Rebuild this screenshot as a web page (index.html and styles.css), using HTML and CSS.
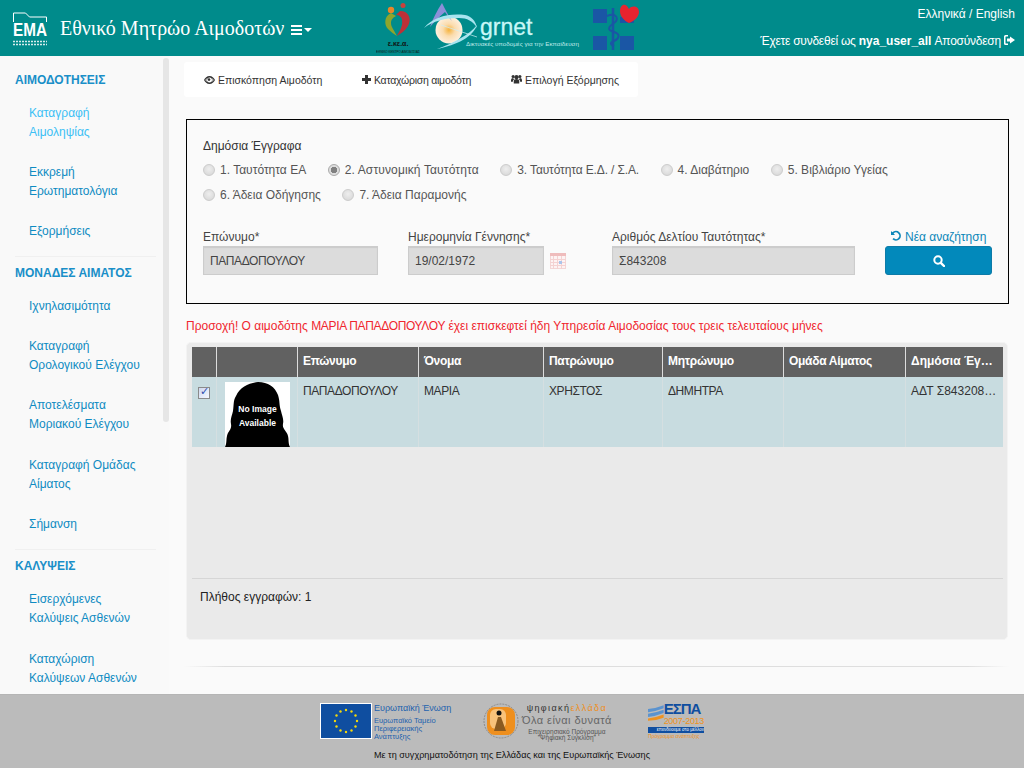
FILE: index.html
```html
<!DOCTYPE html>
<html lang="el">
<head>
<meta charset="utf-8">
<title>Εθνικό Μητρώο Αιμοδοτών</title>
<link rel="stylesheet" href="styles.css">
</head>
<body>
<div class="page">
<header class="topbar">
  <div class="brand">
    <svg class="ema-logo" width="42" height="36" viewBox="0 0 42 36">
      <path d="M1.500 10V1h12l4 4h17v5" fill="none" stroke="#fff" stroke-width="1"/>
      <path d="M1 29.500h34M1 32.500h34" stroke="#d5ecec" stroke-width="1.500" stroke-dasharray="2 1"/>
      <text x="1" y="24" class="ema-text" textLength="34" lengthAdjust="spacingAndGlyphs">EMA</text>
    </svg>
    <span class="brand-title">Εθνικό Μητρώο Αιμοδοτών</span>
    <svg class="brand-menu" width="21" height="10" viewBox="0 0 21 10">
      <path d="M0 0h11v2H0zM0 4h11v2H0zM0 8h11v2H0zM13 3h8l-4 4z" fill="#fff"/>
    </svg>
  </div>
  <div class="logos">
    <svg class="logo-ekea" width="44" height="52" viewBox="0 0 44 52">
      <circle cx="15" cy="7" r="3.200" fill="#e8862a"/>
      <circle cx="27" cy="2.500" r="2.500" fill="#c9413c"/>
      <path d="M15 10C8 13 8 22 12 26c3 3 6 5 9 7-3-6-6-9-6-13 0-4 3-6 5-7z" fill="#8fa52c"/>
      <path d="M24 8c9 0 12 8 8 15-3 5-8 8-11 10 3-6 6-10 5-16 0-3-3-5-6-5z" fill="#bd3138"/>
      <text x="22" y="43" class="ekea-name">ε.κε.α.</text>
      <text x="22" y="50" class="ekea-sub">ΕΘΝΙΚΟ ΚΕΝΤΡΟ ΑΙΜΟΔΟΣΙΑΣ</text>
    </svg>
    <svg class="logo-grnet" width="172" height="52" viewBox="0 0 172 52">
      <defs>
        <radialGradient id="sun"><stop offset="0" stop-color="#f6b33c"/><stop offset=".45" stop-color="#fbdcae"/><stop offset="1" stop-color="#fdf0df"/></radialGradient>
      </defs>
      <circle cx="28" cy="27" r="13.500" fill="url(#sun)"/>
      <path d="M21 0C16 8 12 15 9 24c5-6 10-11 15-15 2 3 4 6 7 9-4-6-7-12-10-18z" fill="#8b8fd8"/>
      <path d="M3 25C12 14 28 10 44 12c6 1 11 6 12 13-4-7-10-10-18-10C24 15 12 18 3 25z" fill="#a8e4ef"/>
      <path d="M16 46c16-6 32-14 40-24-4 12-20 20-40 24z" fill="#a8e4ef"/>
      <path d="M20 22l36 12" stroke="#cfeef3" stroke-width=".7"/>
      <text x="59" y="32" class="grnet-name">grnet</text>
      <text x="45" y="43" class="grnet-sub" textLength="113" lengthAdjust="spacingAndGlyphs">Δικτυακές υποδομές για την Εκπαίδευση</text>
    </svg>
    <svg class="logo-moh" width="46" height="48" viewBox="0 0 46 48">
      <path d="M0 6h14v14H0zM0 33h14v14H0zM27 33h14v14H27zM27 14h14v6H27z" fill="#1a56a5"/>
      <path d="M36 6c-3-7-9-5-9 2 0 6 5 10 9 12 5-2 10-6 10-11 0-6-7-7-10-3z" fill="#e8232f"/>
      <path d="M20 5v42" stroke="#1a56a5" stroke-width="2.500"/>
      <path d="M14 13c9-4 13 3 7 7s-7 7 0 9 5 7 0 9-3 4 0 5" fill="none" stroke="#1a56a5" stroke-width="2"/>
    </svg>
  </div>
  <div class="account">
    <div class="lang">Ελληνικά / English</div>
    <div class="user">Έχετε συνδεθεί ως <b class="user-name">nya_user_all</b> Αποσύνδεση
      <svg width="11" height="10" viewBox="0 0 11 10"><path d="M4 0v1.500H2Q1.500 1.500 1.500 2v6q0 .5.5.5h2V10H1.500Q0 10 0 8.500v-7Q0 0 1.500 0zM6 1.500 11 5 6 8.500V6.500H3v-3h3z" fill="#fff"/></svg>
    </div>
  </div>
</header>

<div class="body-row">
  <nav class="sidebar">
    <div class="side-group side-group-1">
      <h3 class="side-title">ΑΙΜΟΔΟΤΗΣΕΙΣ</h3>
      <a class="side-link is-active">Καταγραφή<br>Αιμοληψίας</a>
      <a class="side-link">Εκκρεμή<br>Ερωτηματολόγια</a>
      <a class="side-link">Εξορμήσεις</a>
    </div>
    <div class="side-group">
      <h3 class="side-title">ΜΟΝΑΔΕΣ ΑΙΜΑΤΟΣ</h3>
      <a class="side-link">Ιχνηλασιμότητα</a>
      <a class="side-link">Καταγραφή<br>Ορολογικού Ελέγχου</a>
      <a class="side-link">Αποτελέσματα<br>Μοριακού Ελέγχου</a>
      <a class="side-link">Καταγραφή Ομάδας<br>Αίματος</a>
      <a class="side-link">Σήμανση</a>
    </div>
    <div class="side-group side-group-3">
      <h3 class="side-title">ΚΑΛΥΨΕΙΣ</h3>
      <a class="side-link">Εισερχόμενες<br>Καλύψεις Ασθενών</a>
      <a class="side-link">Καταχώριση<br>Καλύψεων Ασθενών</a>
    </div>
    <div class="side-thumb"></div>
  </nav>

  <main class="content">
    <div class="tabs">
      <a class="tab tab-1"><svg width="11" height="8" viewBox="0 0 11 8"><path d="M5.500 0C8 0 10 1.800 11 4c-1 2.200-3 4-5.500 4S1 6.200 0 4c1-2.200 3-4 5.500-4zm0 1.500a2.500 2.500 0 1 0 0 5 2.500 2.500 0 0 0 0-5zM1.300 4c.5.8 1 1.300 1.700 1.800A3.500 3.500 0 0 1 3 2.200C2.300 2.700 1.800 3.200 1.300 4zm8.400 0c-.5-.8-1-1.300-1.700-1.800a3.500 3.500 0 0 1 0 3.600c.7-.5 1.200-1 1.700-1.800z" fill="#333"/><circle cx="5" cy="3.600" r="1.300" fill="#333"/></svg> Επισκόπηση Αιμοδότη</a>
      <a class="tab tab-2"><svg width="9" height="9" viewBox="0 0 9 9"><path d="M3 0h3v3h3v3H6v3H3V6H0V3h3z" fill="#333"/></svg> Καταχώριση αιμοδότη</a>
      <a class="tab tab-3"><svg width="11" height="10" viewBox="0 0 12 10"><circle cx="6" cy="3" r="2.300" fill="#333"/><circle cx="2.300" cy="2.300" r="1.700" fill="#333"/><circle cx="9.700" cy="2.300" r="1.700" fill="#333"/><path d="M3 10V7q0-2 3-2t3 2v3zM0 8V6q0-2 2.300-2l1 1.500Q2 6 2 8zM12 8V6q0-2-2.300-2l-1 1.500Q10 6 10 8z" fill="#333"/></svg> Επιλογή Εξόρμησης</a>
    </div>

    <form class="search-box">
      <div class="doc-title">Δημόσια Έγγραφα</div>
      <div class="radios">
        <label class="radio"><input type="radio" name="doc">1. Ταυτότητα ΕΑ</label>
        <label class="radio radio-wide"><input type="radio" name="doc" checked>2. Αστυνομική Ταυτότητα</label>
        <label class="radio radio-tight"><input type="radio" name="doc">3. Ταυτότητα Ε.Δ. / Σ.Α.</label>
        <label class="radio"><input type="radio" name="doc">4. Διαβάτηριο</label>
        <label class="radio"><input type="radio" name="doc">5. Βιβλιάριο Υγείας</label>
        <label class="radio"><input type="radio" name="doc">6. Άδεια Οδήγησης</label>
        <label class="radio"><input type="radio" name="doc">7. Άδεια Παραμονής</label>
      </div>
      <div class="fields">
        <div class="field f-name">
          <label class="field-label">Επώνυμο*</label>
          <input class="field-input caps" type="text" value="ΠΑΠΑΔΟΠΟΥΛΟΥ" readonly>
        </div>
        <div class="field f-date">
          <label class="field-label">Ημερομηνία Γέννησης*</label>
          <div class="date-row">
            <input class="field-input" type="text" value="19/02/1972" readonly>
            <svg width="16" height="16" viewBox="0 0 16 16">
              <rect x=".5" y=".5" width="15" height="15" fill="#fdf3f3" stroke="#f3d6d6"/>
              <rect x="0" y="0" width="16" height="3" fill="#efbcbc"/>
              <path d="M0 6.500h16M0 9.500h16M0 12.500h16M3.500 3v13M7.500 3v13M11.500 3v13" stroke="#f4d2d2" stroke-width="1"/>
              <rect x="9" y="8" width="3" height="3" fill="#a9c4ec"/>
            </svg>
          </div>
        </div>
        <div class="field f-id">
          <label class="field-label">Αριθμός Δελτίου Ταυτότητας*</label>
          <input class="field-input" type="text" value="Σ843208" readonly>
        </div>
        <div class="field f-btn">
          <a class="reset-link"><svg width="11" height="11" viewBox="0 0 11 11"><path d="M0 1v4h4L2.600 3.600A3.200 3.200 0 1 1 2.700 8L1.400 9.300A5 5 0 1 0 1.300 2.300z" fill="#0b86b8"/></svg> Νέα αναζήτηση</a>
          <button class="search-btn" type="button"><svg width="12" height="12" viewBox="0 0 12 12"><circle cx="5" cy="5" r="3.700" fill="none" stroke="#fff" stroke-width="2"/><path d="M7.800 7.800 11 11" stroke="#fff" stroke-width="2.400" stroke-linecap="round"/></svg></button>
        </div>
      </div>
    </form>

    <p class="warning">Προσοχή! Ο αιμοδότης <span class="caps-soft">ΜΑΡΙΑ ΠΑΠΑΔΟΠΟΥΛΟΥ</span> έχει επισκεφτεί ήδη Υπηρεσία Αιμοδοσίας τους τρεις τελευταίους μήνες</p>

    <section class="grid-panel">
      <div class="grid-row grid-head">
        <div class="c c-check"></div>
        <div class="c c-photo"></div>
        <div class="c c-a">Επώνυμο</div>
        <div class="c c-b">Όνομα</div>
        <div class="c c-c">Πατρώνυμο</div>
        <div class="c c-d">Μητρώνυμο</div>
        <div class="c c-e">Ομάδα Αίματος</div>
        <div class="c c-f">Δημόσια Έγγραφα</div>
      </div>
      <div class="grid-row grid-data">
        <div class="c c-check"><input class="row-check" type="checkbox" checked></div>
        <div class="c c-photo">
          <div class="photo">
            <svg width="65" height="65" viewBox="0 0 65 65">
              <path d="M0 65c2-4 1-7 2-11 1-5 5-6 4-12-1-5 1-8 2-13 1-6 0-10 3-15C15 5 24 1 33 0c10 0 17 5 20 13 2 6 1 10 3 16 1 5 3 8 2 13-1 5 4 7 5 12 1 4 0 7 2 11z" fill="#000"/>
            </svg>
            <span class="photo-text">No Image<br>Available</span>
          </div>
        </div>
        <div class="c c-a caps">ΠΑΠΑΔΟΠΟΥΛΟΥ</div>
        <div class="c c-b caps">ΜΑΡΙΑ</div>
        <div class="c c-c caps">ΧΡΗΣΤΟΣ</div>
        <div class="c c-d caps">ΔΗΜΗΤΡΑ</div>
        <div class="c c-e"></div>
        <div class="c c-f">ΑΔΤ Σ843208 (Αστ)</div>
      </div>
      <div class="grid-space"></div>
      <div class="grid-foot">Πλήθος εγγραφών: 1</div>
    </section>
    <div class="rule"></div>
  </main>
</div>

<footer class="footer">
  <div class="foot-logos">
    <div class="eu">
      <svg class="eu-flag" width="52" height="36" viewBox="0 0 52 36">
        <rect x=".5" y=".5" width="51" height="35" fill="#0f4ea0" stroke="#fff"/>
        <g fill="#f5d90a">
          <circle cx="26" cy="7" r="1.200"/><circle cx="31.500" cy="8.500" r="1.200"/><circle cx="35.500" cy="12.500" r="1.200"/><circle cx="37" cy="18" r="1.200"/><circle cx="35.500" cy="23.500" r="1.200"/><circle cx="31.500" cy="27.500" r="1.200"/><circle cx="26" cy="29" r="1.200"/><circle cx="20.500" cy="27.500" r="1.200"/><circle cx="16.500" cy="23.500" r="1.200"/><circle cx="15" cy="18" r="1.200"/><circle cx="16.500" cy="12.500" r="1.200"/><circle cx="20.500" cy="8.500" r="1.200"/>
        </g>
      </svg>
      <div class="eu-text">
        <div class="eu-name">Ευρωπαϊκή Ένωση</div>
        <div class="eu-fund">Ευρωπαϊκό Ταμείο<br>Περιφερειακής<br>Ανάπτυξης</div>
      </div>
    </div>
    <div class="de">
      <svg width="37" height="36" viewBox="0 0 37 36">
        <circle cx="18" cy="18" r="17" fill="none" stroke="#777" stroke-width=".7" stroke-dasharray="2 1"/>
        <rect x="4" y="4" width="28" height="28" rx="8" fill="#ee8f1e"/>
        <rect x="7" y="6" width="16" height="20" rx="6" fill="#f8c27a"/>
        <circle cx="16" cy="10" r="2.500" fill="#111"/>
        <path d="M11 28l4-14h3l5 14z" fill="#8a5a20"/>
      </svg>
      <div class="de-text">
        <div class="de-name">ψηφιακή<span class="de-or">ελλάδα</span></div>
        <div class="de-motto">Όλα είναι δυνατά</div>
        <div class="de-sub">Επιχειρησιακό Πρόγραμμα<br>"Ψηφιακή Σύγκλιση"</div>
      </div>
    </div>
    <div class="espa">
      <div class="espa-top">
        <svg width="20" height="20" viewBox="0 0 20 20"><path d="M0 5q10-1 20-5v4Q10 8 0 9zM0 11q10-1 20-5v4Q10 14 0 15z" fill="#5b93cf"/><path d="M0 17q10-1 20-5v4Q10 20 0 20z" fill="#ef9220"/></svg>
        <div>
          <div class="espa-name">ΕΣΠΑ</div>
          <div class="espa-years">2007-2013</div>
        </div>
      </div>
      <div class="espa-bar">επενδύουμε στο μέλλον</div>
      <div class="espa-sub">Πρόγραμμα ανάπτυξης</div>
    </div>
  </div>
  <div class="foot-note">Με τη συγχρηματοδότηση της Ελλάδας και της Ευρωπαϊκής Ένωσης</div>
</footer>
</div>
</body>
</html>
```
FILE: styles.css
```css
* { box-sizing: border-box; }
html, body { margin: 0; padding: 0; height: 100%; overflow: hidden; }
body { font-family: "Liberation Sans", Arial, sans-serif; font-size: 12px; color: #333; background: #fafafa; }
.page { display: flex; flex-direction: column; height: 768px; }

.topbar { flex: 0 0 56px; background: #008b8b; color: #fff; display: flex; position: relative; }
.brand { display: flex; align-items: center; width: 383px; padding-left: 12px; }
.ema-logo { margin-right: 6px; margin-top: 4px; }
.ema-text { font: bold 18px "Liberation Sans", sans-serif; fill: #fff; }
.brand-title { font: 20px "Liberation Serif", serif; }
.brand-menu { margin-left: 7px; margin-top: 3px; }
.logos { display: flex; align-items: flex-start; padding-top: 3px; }
.logo-ekea { margin-left: -7px; }
.ekea-name { font: bold 7px "Liberation Sans", sans-serif; fill: #111; text-anchor: middle; }
.ekea-sub { font: 3px "Liberation Sans", sans-serif; fill: #111; text-anchor: middle; }
.logo-grnet { margin-left: 1px; }
.grnet-name { font: 23px "Liberation Sans", sans-serif; fill: #c9f7f7; stroke: #c9f7f7; stroke-width: .3px; }
.grnet-sub { font: 6px "Liberation Sans", sans-serif; fill: #bfeaea; }
.account { flex: 1; text-align: right; padding: 7px 9px 0 0; }
.lang { line-height: 14px; }
.user { line-height: 14px; margin-top: 13px; letter-spacing: -.25px; white-space: nowrap; }
.user-name { letter-spacing: 0; }

.body-row { flex: 1; display: flex; min-height: 0; }
.sidebar { flex: 0 0 169px; position: relative; overflow: hidden; background: #f9f9f9; padding-top: 13px; }
.side-group { margin: 0 15px 6px 15px; padding-bottom: 4px; border-bottom: 1px solid #f0f0f0; width: 141px; }
.side-group-1 { padding-bottom: 4px; margin-bottom: 5px; }
.side-title { margin: -1px 0 1px; font-size: 12px; line-height: 24px; color: #1a8fc8; font-weight: bold; white-space: nowrap; }
.side-group-3 .side-title { margin-top: -2px; margin-bottom: 2px; }
.side-link { display: block; padding: 10.500px 0 10.500px 14px; line-height: 19.200px; color: #0f8bc2; white-space: nowrap; }
.side-link.is-active { color: #3cc0f5; }
.side-thumb { position: absolute; top: 2px; right: 0; width: 6px; height: 364px; background: #e6e6e6; border-radius: 3px; }

.content { flex: 1; min-width: 0; padding: 6px 15px 0 15px; }
.tabs { display: flex; width: 454px; height: 35px; background: #fff; border-radius: 3px; font-size: 10.500px; align-items: center; }
.tab { color: #333; white-space: nowrap; }
.tab-1 { margin-left: 20px; }
.tab-2 { margin-left: 40px; letter-spacing: -.25px; }
.tab-3 { margin-left: 40px; }
.search-box { margin: 22px 0 0 2px; height: 185px; width: 823px; border: 1px solid #000; padding: 18px 16px 0; }
.doc-title { line-height: 16px; }
.radios { display: flex; flex-wrap: wrap; column-gap: 21.500px; margin-top: 3px; }
.radio { display: flex; align-items: center; gap: 5px; height: 25px; color: #555; white-space: nowrap; }
.radio-wide { letter-spacing: .13px; }
.radio-tight { letter-spacing: -.13px; }
.radio input { appearance: none; margin: 0; width: 12px; height: 12px; border-radius: 50%; border: 1px solid #ccc; background: radial-gradient(circle at 50% 40%, #eee, #d4d4d4); }
.radio input:checked { background: radial-gradient(circle, #808080 0 3px, #ddd 3.500px); border-color: #aaa; }
.fields { display: flex; margin-top: 21px; align-items: flex-start; }
.field-label { display: block; line-height: 18px; color: #444; }
.field-input { display: block; height: 29px; border: 1px solid #ccc; background: #dcdcdc; padding: 0 6px; font: 12px "Liberation Sans", sans-serif; color: #444; width: 100%; outline: 0; box-shadow: inset 0 1px 1px rgba(0,0,0,.08); }
.field-input.caps { letter-spacing: -.42px; }
.f-name { width: 175px; }
.f-date { width: 159px; margin-left: 30px; }
.date-row { display: flex; align-items: center; gap: 6px; }
.date-row .field-input { width: 136px; flex: none; }
.f-id { width: 243px; margin-left: 45px; }
.f-btn { width: 107px; margin-left: 30px; text-align: center; }
.reset-link { display: block; line-height: 18px; color: #0b86b8; white-space: nowrap; }
.search-btn { display: block; width: 107px; height: 29px; border: 1px solid #0d7ba8; border-radius: 3px; background: #0289bb; padding: 3px 0 0; }

.warning { margin: 15px 0 0 2px; line-height: 14px; color: #f0262e; white-space: nowrap; }
.caps-soft { letter-spacing: -.33px; }
.grid-panel { margin: 9px 0 0 2px; width: 822px; height: 298px; background: #eaeaea; border: 1px solid #f3f3f3; border-radius: 5px; padding: 4px 4px 4px 5px; display: flex; flex-direction: column; }
.grid-row { display: grid; grid-template-columns: 25px 81px 121px 125px 119px 121px 122px 97px; }
.grid-head { height: 30px; background: #616161; color: #fff; font-weight: bold; letter-spacing: -.3px; }
.grid-head .c { line-height: 29px; border-right: 1px solid #ddd; padding: 0 5px; white-space: nowrap; overflow: hidden; text-overflow: ellipsis; }
.grid-head .c:last-child { border-right: 0; letter-spacing: 0; }
.grid-data { height: 70px; background: #c8dce0; color: #333; }
.grid-data .c { border-right: 1px solid #d5dfe1; padding: 6px 5px 0; line-height: 16px; white-space: nowrap; overflow: hidden; text-overflow: ellipsis; }
.grid-data .c:last-child { border-right: 0; }
.grid-data .caps { letter-spacing: -.42px; }
.grid-data .c-photo { padding: 5px 0 0 8px; }
.grid-data .c-check { padding: 10px 0 0 6px; }
.row-check { appearance: none; display: block; margin: 0; width: 12px; height: 12px; border: 1px solid #8a8a8a; background: linear-gradient(135deg, #cfd8ee, #f5f7ff); position: relative; }
.row-check:checked::after { content: "✓"; position: absolute; left: 1px; top: -2px; font: bold 11px/12px "DejaVu Sans", sans-serif; color: #2f4fb0; }
.photo { position: relative; width: 65px; height: 65px; background: #fff; }
.photo svg { display: block; }
.photo-text { position: absolute; left: 0; right: 0; top: 20px; text-align: center; color: #fff; font: bold 8.500px/14px "Liberation Sans", sans-serif; }
.grid-space { flex: 1; border-bottom: 1px solid #d6d6d6; }
.grid-foot { flex: 0 0 56px; padding: 10px 8px 0; line-height: 16px; color: #222; }
.rule { height: 1px; margin-top: 26px; background: linear-gradient(90deg, transparent, #dedede 5%, #dedede 95%, transparent); }

.footer { flex: 0 0 74px; background: #bbb; border-top: 1px solid #b5b5b5; }
.foot-logos { display: flex; height: 48px; padding: 8px 0 0 320px; }
.eu { display: flex; width: 163px; }
.eu-text { margin-left: 2px; color: #1e62ae; white-space: nowrap; }
.eu-name { font-size: 9px; line-height: 11px; }
.eu-fund { font-size: 7.500px; line-height: 8px; margin-top: 3px; }
.de { display: flex; width: 165px; }
.de-text { margin-left: 2px; color: #555; text-align: center; white-space: nowrap; }
.de-name { font-size: 9px; line-height: 11px; color: #333; letter-spacing: 1.400px; }
.de-or { color: #ee8f1e; }
.de-motto { font-size: 11px; line-height: 12px; letter-spacing: .45px; color: #666; }
.de-sub { font-size: 6.500px; line-height: 6px; margin-top: 3px; }
.espa { width: 56px; }
.espa-top { display: flex; gap: 0; }
.espa-name { font: bold 15px/12px "Liberation Sans", sans-serif; color: #0f4ea0; letter-spacing: -1px; white-space: nowrap; }
.espa-years { font-size: 9px; line-height: 10px; color: #ef9220; white-space: nowrap; letter-spacing: -.3px; margin-top: 1px; }
.espa-bar { font-size: 4.500px; line-height: 6px; background: #0f4ea0; color: #fff; text-align: right; white-space: nowrap; overflow: hidden; margin-top: 1px; }
.espa-sub { font-size: 5px; line-height: 6px; color: #ef9220; white-space: nowrap; }
.foot-note { text-align: center; font-size: 9.100px; line-height: 12px; color: #111; margin-top: 6px; }
```
